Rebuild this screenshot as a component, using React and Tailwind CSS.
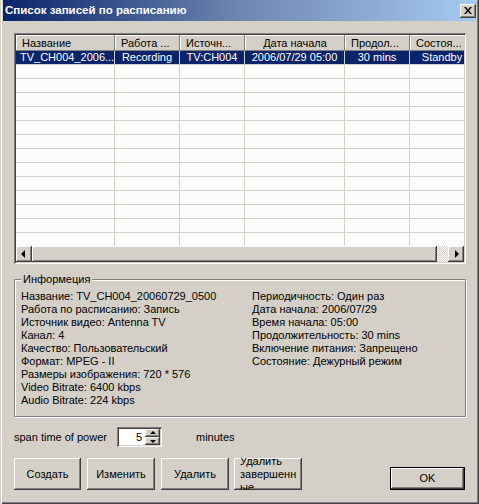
import React from "react";

const COLS = [
  { w: "w-[99px]", head: "Название", headAlign: "justify-start pl-[6px]", cell: "TV_CH004_2006...", cellAlign: "justify-start pl-[4px]" },
  { w: "w-[65px]", head: "Работа ...", headAlign: "justify-start pl-[6px]", cell: "Recording", cellAlign: "justify-center" },
  { w: "w-[65px]", head: "Источн...", headAlign: "justify-start pl-[6px]", cell: "TV:CH004", cellAlign: "justify-center" },
  { w: "w-[100px]", head: "Дата начала", headAlign: "justify-center", cell: "2006/07/29 05:00", cellAlign: "justify-center" },
  { w: "w-[65px]", head: "Продол...", headAlign: "justify-start pl-[6px]", cell: "30 mins", cellAlign: "justify-center" },
  { w: "w-[65px]", head: "Состоя...", headAlign: "justify-start pl-[6px]", cell: "Standby", cellAlign: "justify-center" },
];

const LEFT_INFO = [
  "Название: TV_CH004_20060729_0500",
  "Работа по расписанию: Запись",
  "Источник видео: Antenna TV",
  "Канал: 4",
  "Качество: Пользовательский",
  "Формат: MPEG - II",
  "Размеры изображения: 720 * 576",
  "Video Bitrate: 6400 kbps",
  "Audio Bitrate: 224 kbps",
];

const RIGHT_INFO = [
  "Периодичность: Один раз",
  "Дата начала: 2006/07/29",
  "Время начала: 05:00",
  "Продолжительность: 30 mins",
  "Включение питания: Запрещено",
  "Состояние: Дежурный режим",
];

const raised = "bg-[#d4d0c8] shadow-[inset_-1px_-1px_#404040,inset_1px_1px_#fff,inset_-2px_-2px_#808080]";

const Arrow = ({ dir }) => (
  <svg width="8" height="8" viewBox="0 0 8 8">
    {dir === "left" && <path d="M5 0v8L1 4z" fill="#000" />}
    {dir === "right" && <path d="M3 0v8l4-4z" fill="#000" />}
    {dir === "up" && <path d="M1 5h6L4 2z" fill="#000" />}
    {dir === "down" && <path d="M1 3h6L4 6z" fill="#000" />}
  </svg>
);

const Btn = ({ className, children }) => (
  <div className={`flex h-[32px] items-center justify-center overflow-hidden text-[11px] text-black ${raised} ${className}`}>{children}</div>
);

export default function App() {
  const rows = Array.from({ length: 13 });
  return (
    <div
      className="flex h-[504px] w-[479px] flex-col overflow-hidden bg-[#d4d0c8] px-[3px] pb-[3px] text-[11px] leading-[13px] text-black shadow-[inset_1px_0_#d4d0c8,inset_2px_0_#fff,inset_-1px_-1px_#404040,inset_-2px_-2px_#808080]"
      style={{ fontFamily: '"Liberation Sans", Arial, sans-serif' }}
    >
      {/* title bar */}
      <div className="flex h-[21px] shrink-0 items-center justify-between bg-gradient-to-r from-[#0a246a] via-[#6e87b0] to-[#a6caf0] pl-[2px] pr-[0px]">
        <span className="text-[11.5px] font-bold text-white">Список записей по расписанию</span>
        <div className={`flex h-[14px] w-[16px] items-center justify-center ${raised}`}>
          <svg width="8" height="7" viewBox="0 0 8 7">
            <path d="M0 0h2l2 2.5L6 0h2L5 3.5 8 7H6L4 4.5 2 7H0l3-3.5z" fill="#000" />
          </svg>
        </div>
      </div>

      <div className="flex flex-1 flex-col px-[11px] pt-[12px]">
        {/* list view */}
        <div className="h-[231px] w-[452px] bg-[#fcfcfc] p-[2px] shadow-[inset_1px_1px_#808080,inset_-1px_-1px_#fff,inset_2px_2px_#404040,inset_-2px_-2px_#d4d0c8]">
          <div className="flex h-[211px] flex-col overflow-hidden">
            <div className="flex h-[16px] shrink-0">
              {COLS.map((c) => (
                <div key={c.head} className={`flex shrink-0 items-center whitespace-nowrap ${c.w} ${c.headAlign} bg-[#d4d0c8] shadow-[inset_-1px_-1px_#808080,inset_1px_1px_#fff]`}>
                  {c.head}
                </div>
              ))}
            </div>
            <div className="flex h-[14px] shrink-0">
              {COLS.map((c) => (
                <div key={c.cell} className={`flex shrink-0 items-center whitespace-nowrap border-r border-b border-[#d4d0c8] bg-[#0a246a] text-white ${c.w} ${c.cellAlign}`}>
                  {c.cell}
                </div>
              ))}
            </div>
            {rows.map((_, i) => (
              <div key={i} className="flex h-[14px] shrink-0">
                {COLS.map((c) => (
                  <div key={c.head} className={`shrink-0 border-r border-b border-[#d4d0c8] ${c.w}`} />
                ))}
              </div>
            ))}
          </div>
          {/* horizontal scrollbar */}
          <div className="flex h-[16px]">
            <div className={`flex h-[16px] w-[16px] items-center justify-center ${raised}`}>
              <Arrow dir="left" />
            </div>
            <div className={`h-[16px] w-[405px] ${raised}`} />
            <div className="h-[16px] w-[11px] bg-[repeating-conic-gradient(#d4d0c8_0_25%,#fff_0_50%)] bg-[length:2px_2px]" />
            <div className={`flex h-[16px] w-[16px] items-center justify-center ${raised}`}>
              <Arrow dir="right" />
            </div>
          </div>
        </div>

        {/* info group */}
        <div className="relative mt-[15px] h-[138px] w-[452px] border border-[#808080] shadow-[1px_1px_#fff,inset_1px_1px_#fff]">
          <span className="absolute -top-[7px] left-[6px] bg-[#d4d0c8] px-[2px]">Информеция</span>
          <div className="flex pl-[6px] pt-[10px]">
            <div className="flex w-[231px] flex-col">
              {LEFT_INFO.map((t) => (
                <div key={t} className="h-[13px] whitespace-nowrap">{t}</div>
              ))}
            </div>
            <div className="flex flex-col">
              {RIGHT_INFO.map((t) => (
                <div key={t} className="h-[13px] whitespace-nowrap">{t}</div>
              ))}
            </div>
          </div>
        </div>

        {/* span time */}
        <div className="mt-[10px] flex h-[20px] items-center">
          <span className="w-[103px]">span time of power</span>
          <div className="flex h-[20px] w-[45px] items-center bg-white p-[2px] shadow-[inset_1px_1px_#808080,inset_-1px_-1px_#fff,inset_2px_2px_#404040,inset_-2px_-2px_#d4d0c8]">
            <span className="flex-1 pr-[3px] text-right">5</span>
            <div className="flex flex-col">
              <div className={`flex h-[8px] w-[15px] items-center justify-center ${raised}`}>
                <Arrow dir="up" />
              </div>
              <div className={`flex h-[8px] w-[15px] items-center justify-center ${raised}`}>
                <Arrow dir="down" />
              </div>
            </div>
          </div>
          <span className="ml-[34px]">minutes</span>
        </div>

        {/* buttons */}
        <div className="mt-[11px] flex items-end">
          <Btn className="w-[67px]">Создать</Btn>
          <Btn className="ml-[6px] w-[68px]">Изменить</Btn>
          <Btn className="ml-[6px] w-[68px]">Удалить</Btn>
          <Btn className="ml-[5px] w-[68px] justify-start! pl-[6px] pr-[4px] break-words">
            <span className="block w-[58px] leading-[13px]">Удалить завершенные</span>
          </Btn>
          <div className="ml-auto flex h-[23px] w-[75px] items-center justify-center border border-black bg-[#d4d0c8] shadow-[inset_-1px_-1px_#404040,inset_1px_1px_#fff,inset_-2px_-2px_#808080]">
            OK
          </div>
        </div>
      </div>
    </div>
  );
}
